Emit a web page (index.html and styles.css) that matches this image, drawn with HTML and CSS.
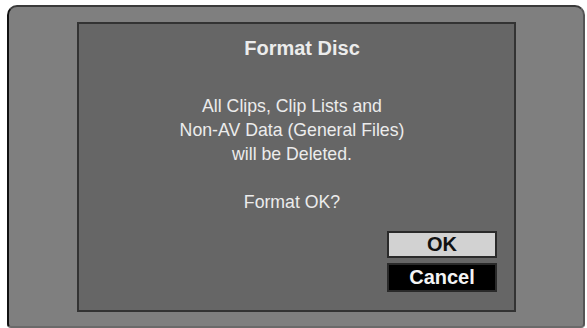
FILE: index.html
```html
<!DOCTYPE html>
<html>
<head>
<meta charset="utf-8">
<link rel="stylesheet" href="styles.css">
</head>
<body>
<div class="frame">
  <div class="panel">
    <div class="title">Format Disc</div>
    <div class="message">
      <div>All Clips, Clip Lists and</div>
      <div>Non-AV Data (General Files)</div>
      <div>will be Deleted.</div>
      <div class="blank">&nbsp;</div>
      <div>Format OK?</div>
    </div>
    <div class="buttons">
      <div class="btn ok">OK</div>
      <div class="btn cancel">Cancel</div>
    </div>
  </div>
</div>
</body>
</html>
```
FILE: styles.css
```css
html, body {
  margin: 0;
  padding: 0;
  background: #ffffff;
  overflow: hidden;
}
body {
  width: 587px;
  height: 328px;
  font-family: "Liberation Sans", Arial, sans-serif;
}
.frame {
  box-sizing: border-box;
  margin: 5px 0 0 7px;
  width: 578px;
  height: 323px;
  background: #7f7f7f;
  border: 2px solid #3a3a3a;
  border-left-color: #111;
  border-right-color: #555;
  border-bottom-color: #6a6a6a;
  border-radius: 10px 10px 4px 4px;
  padding: 15px 0 0 68px;
}
.panel {
  box-sizing: border-box;
  width: 439px;
  height: 290px;
  background: #666666;
  border: 2px solid #333333;
  padding: 12px 17px 0 0;
  display: flex;
  flex-direction: column;
  color: #ececec;
}
.title {
  font-weight: bold;
  font-size: 20px;
  line-height: 24px;
  text-align: center;
  padding-left: 28px;
}
.message {
  margin-top: 34px;
  font-size: 17.7px;
  line-height: 24px;
  text-align: center;
  padding-left: 8px;
}
.buttons {
  margin-top: 17px;
  display: flex;
  flex-direction: column;
  align-items: flex-end;
  gap: 5px;
}
.btn {
  box-sizing: border-box;
  width: 110px;
  height: 27px;
  border: 2px solid #2a2a2a;
  font-weight: bold;
  font-size: 20px;
  line-height: 23px;
  text-align: center;
}
.ok {
  background: #d2d2d2;
  color: #111;
}
.cancel {
  background: #000;
  color: #f4f4f4;
  height: 29px;
  line-height: 25px;
}
```
